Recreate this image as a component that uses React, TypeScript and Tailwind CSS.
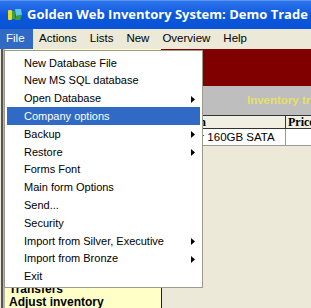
import React from "react";

const items: { label: string; arrow?: boolean; active?: boolean }[] = [
  { label: "New Database File" },
  { label: "New MS SQL database" },
  { label: "Open Database", arrow: true },
  { label: "Company options", active: true },
  { label: "Backup", arrow: true },
  { label: "Restore", arrow: true },
  { label: "Forms Font" },
  { label: "Main form Options" },
  { label: "Send..." },
  { label: "Security" },
  { label: "Import from Silver, Executive", arrow: true },
  { label: "Import from Bronze", arrow: true },
  { label: "Exit" },
];

const menus = ["File", "Actions", "Lists", "New", "Overview", "Help"];

function Arrow({ white }: { white?: boolean }) {
  return (
    <svg width="4" height="7" viewBox="0 0 4 7" className="absolute right-[5px] top-[6px]">
      <path d="M0 0 L4 3.5 L0 7 Z" fill={white ? "#fff" : "#000"} />
    </svg>
  );
}

export default function App() {
  return (
    <div
      className="relative w-[311px] h-[308px] overflow-hidden bg-[#ECE9D8]"
      style={{ fontFamily: '"Liberation Sans", Arial, sans-serif' }}
    >
      {/* Title bar */}
      <div className="h-[29px] flex items-center bg-gradient-to-b from-[#2E76EE] via-[#0B58DD] to-[#0A52D6] border-t border-[#5A93F0]">
        <svg width="16" height="16" viewBox="0 0 16 16" className="shrink-0 ml-[7px] mr-[4px] block">
          <rect x="1" y="3" width="4" height="10" rx="1" fill="#E8D82A" />
          <rect x="5" y="4" width="3" height="8" fill="#3DA13A" />
          <path d="M8 2 L14 2 L15 8 L9 9 Z" fill="#5FC6E8" />
          <path d="M9 9 L15 8 L13 13 L8 13 Z" fill="#3A9E42" />
        </svg>
        <span
          className="text-white font-bold text-[13px] whitespace-nowrap"
          style={{ fontFamily: '"Open Sans", "DejaVu Sans", sans-serif' }}
        >
          Golden Web Inventory System: Demo Trade
        </span>
      </div>

      <div className="flex h-[279px]">
        {/* left window frame */}
        <div className="w-[4px] bg-[#0A4FD6]" />
        <div className="flex-1 flex flex-col">
          {/* menu bar */}
          <div className="h-[21px] flex items-stretch text-[11.5px] text-black bg-[#ECE9D8]">
            {menus.map((m, i) => (
              <div
                key={m}
                className={
                  i === 0
                    ? "flex items-center pl-[6px] pr-[8px] bg-[#316AC5] text-white"
                    : "flex items-center px-[6.5px]"
                }
              >
                {m}
              </div>
            ))}
          </div>

          {/* body */}
          <div className="flex-1 flex">
            {/* left panel */}
            <div className="w-[162px] flex pl-[1px]">
              <div className="w-[2px] bg-[#555]" />
              <div className="w-[2px] bg-[#B8B4A4]" />
              <div className="flex-1 bg-[#FFFFC8] border-r border-[#222] pt-[234px] pl-[4px] text-[12px] font-bold leading-[12.5px] text-black">
                <div>Transfers</div>
                <div>Adjust inventory</div>
              </div>
            </div>
            {/* right area */}
            <div className="flex-1 flex flex-col">
              <div className="h-[37px] bg-[#800000]" />
              <div className="h-[29px] bg-[#BEBEBE] flex items-center pl-[85px] overflow-hidden">
                <span className="text-[#E6E066] font-bold text-[11.5px] whitespace-nowrap">
                  Inventory transactions
                </span>
              </div>
              <div
                className="h-[14px] flex border-t border-b border-[#333] bg-[#F1EFE2] text-[12px] font-bold leading-[12px]"
                style={{ fontFamily: '"Liberation Serif", "Times New Roman", serif' }}
              >
                <div className="w-[124px] border-r border-[#333] pr-[79px] flex justify-end overflow-hidden">
                  <span className="shrink-0 whitespace-nowrap">Description</span>
                </div>
                <div className="flex-1 pl-[2px] whitespace-nowrap overflow-hidden">Price</div>
              </div>
              <div className="h-[17px] flex bg-white border-b border-[#999] text-[11.5px] leading-[16px]">
                <div className="w-[124px] border-r border-[#999] pl-[7px] whitespace-nowrap overflow-hidden">Maxtor 160GB SATA</div>
                <div className="flex-1" />
              </div>
            </div>
          </div>
        </div>
      </div>

      {/* dropdown */}
      <div className="absolute left-[4px] top-[50px] w-[199px] bg-white border border-[#9D9A8C] pt-[3px] pb-[2px] text-[11px] text-black">
        {items.map((it) => (
          <div
            key={it.label}
            className={
              "relative h-[17.8px] flex items-center pl-[17px] mx-[2px] whitespace-nowrap " +
              (it.active ? "bg-[#316AC5] text-white" : "")
            }
          >
            {it.label}
            {it.arrow && <Arrow white={it.active} />}
          </div>
        ))}
      </div>
    </div>
  );
}
